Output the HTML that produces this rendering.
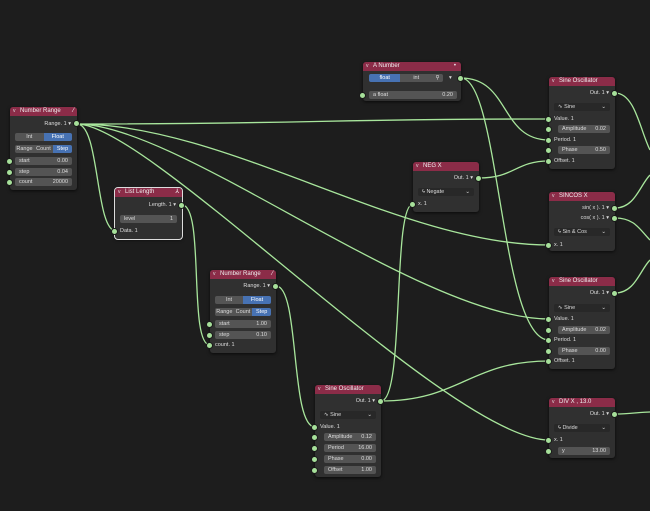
<!DOCTYPE html><html><head><meta charset="utf-8"><style>
body{margin:0;width:650px;height:511px;background:#1d1d1d;overflow:hidden;position:relative;font-family:"Liberation Sans",sans-serif}
svg{position:absolute;left:0;top:0}
.n{position:absolute;background:#303030;border-radius:3px;box-shadow:0 1px 3px rgba(0,0,0,.7)}
.sel{outline:1px solid #ddd}
.h{height:9px;background:#8b2c48;border-radius:3px 3px 0 0;font-size:6px;color:#eee;padding-left:10px;line-height:9px;position:relative;white-space:nowrap}
.h:before{content:"v";position:absolute;left:3px;top:0;font-size:5px;color:#ddd}
.r{position:absolute;font-size:5.5px;color:#ddd;line-height:8px;height:8px;white-space:nowrap}
.o{right:6px;text-align:right}
.i{left:5px}
.f{background:#545454;border-radius:2px;display:flex;justify-content:space-between;padding:0 4px;box-sizing:border-box}
.d{background:#282828;border-radius:2px;padding:0 4px;box-sizing:border-box}
.t{display:flex;border-radius:2px;overflow:hidden}
.t span{flex:1;text-align:center;background:#545454}
.t span.b{background:#4772b3;color:#fff}
.s{position:absolute;width:5px;height:5px;border-radius:50%;background:#a6e09a;box-shadow:0 0 0 1px #1a1a1a}
</style></head><body>
<svg width="650" height="511" fill="none" stroke="#a8e69c" stroke-width="1.3">
<path d="M77 124 C300 124 330 119 549 119"/>
<path d="M77 124 C227 124 399 245 549 245"/>
<path d="M77 124 C180 124 420 319 549 319"/>
<path d="M77 124 C150 124 450 440 549 440"/>
<path d="M77 124 C100 124 95 231 116 231"/>
<path d="M182 205 C205 205 188 345 210 345"/>
<path d="M276 286 C300 286 290 427 315 427"/>
<path d="M461 78 C510 78 500 140 549 140"/>
<path d="M461 78 C500 78 500 340 549 340"/>
<path d="M479 178 C515 178 515 161 549 161"/>
<path d="M381 401 C405 401 392 204 413 204"/>
<path d="M381 401 C460 401 470 361 549 361"/>
<path d="M615 93 C635 93 640 130 650 150"/>
<path d="M615 208 C635 208 640 185 650 175"/>
<path d="M615 218 C635 218 640 230 650 240"/>
<path d="M615 293 C635 293 640 270 650 260"/>
<path d="M615 414 C630 414 640 412 650 412"/>
</svg>

<div class="n" style="left:10px;top:107px;width:67px;height:83px">
<div class="h">Number Range<span style="position:absolute;right:3px;color:#fff">⁄</span></div>
<div class="r o" style="top:13px">Range. 1 ▾</div>
<div class="r t" style="top:26px;left:5px;width:57px"><span>Int</span><span class="b">Float</span></div>
<div class="r t" style="top:38px;left:5px;width:57px"><span>Range</span><span>Count</span><span class="b">Step</span></div>
<div class="r f" style="top:50px;left:5px;width:57px"><span>start</span><span>0.00</span></div>
<div class="r f" style="top:61px;left:5px;width:57px"><span>step</span><span>0.04</span></div>
<div class="r f" style="top:71px;left:5px;width:57px"><span>count</span><span>20000</span></div>
<div class="s" style="left:64px;top:14px"></div>
<div class="s" style="left:-3px;top:52px"></div><div class="s" style="left:-3px;top:63px"></div><div class="s" style="left:-3px;top:73px"></div>
</div>

<div class="n sel" style="left:115px;top:188px;width:67px;height:51px">
<div class="h">List Length<span style="position:absolute;right:3px;color:#fff">⅄</span></div>
<div class="r o" style="top:13px">Length. 1 ▾</div>
<div class="r f" style="top:27px;left:5px;width:57px"><span>level</span><span>1</span></div>
<div class="r i" style="top:39px">Data. 1</div>
<div class="s" style="left:64px;top:15px"></div><div class="s" style="left:-3px;top:41px"></div>
</div>

<div class="n" style="left:363px;top:62px;width:98px;height:39px">
<div class="h">A Number<span style="position:absolute;right:5px">•</span></div>
<div class="r t" style="top:12px;left:6px;width:74px"><span class="b">float</span><span>int</span><span style="flex:.35">⚲</span></div>
<div class="r" style="top:12px;left:86px">▾</div>
<div class="r f" style="top:29px;left:6px;width:88px"><span>a float</span><span>0.20</span></div>
<div class="s" style="left:95px;top:14px"></div><div class="s" style="left:-3px;top:31px"></div>
</div>

<div class="n" style="left:549px;top:77px;width:66px;height:92px">
<div class="h">Sine Oscillator</div>
<div class="r o" style="top:12px">Out. 1 ▾</div>
<div class="r d" style="top:26px;left:5px;width:56px">∿ Sine<span style="float:right">⌄</span></div>
<div class="r i" style="top:38px">Value. 1</div>
<div class="r f" style="top:48px;left:9px;width:52px"><span>Amplitude</span><span>0.02</span></div>
<div class="r i" style="top:59px">Period. 1</div>
<div class="r f" style="top:69px;left:9px;width:52px"><span>Phase</span><span>0.50</span></div>
<div class="r i" style="top:80px">Offset. 1</div>
<div class="s" style="left:63px;top:14px"></div>
<div class="s" style="left:-3px;top:40px"></div><div class="s" style="left:-3px;top:50px"></div><div class="s" style="left:-3px;top:61px"></div><div class="s" style="left:-3px;top:71px"></div><div class="s" style="left:-3px;top:82px"></div>
</div>

<div class="n" style="left:413px;top:162px;width:66px;height:50px">
<div class="h">NEG X</div>
<div class="r o" style="top:12px">Out. 1 ▾</div>
<div class="r d" style="top:26px;left:5px;width:56px">ϟ Negate<span style="float:right">⌄</span></div>
<div class="r i" style="top:38px">x. 1</div>
<div class="s" style="left:63px;top:14px"></div><div class="s" style="left:-3px;top:40px"></div>
</div>

<div class="n" style="left:549px;top:192px;width:66px;height:59px">
<div class="h">SINCOS X</div>
<div class="r o" style="top:12px">sin( x ). 1 ▾</div>
<div class="r o" style="top:22px">cos( x ). 1 ▾</div>
<div class="r d" style="top:36px;left:5px;width:56px">ϟ Sin &amp; Cos<span style="float:right">⌄</span></div>
<div class="r i" style="top:49px">x. 1</div>
<div class="s" style="left:63px;top:14px"></div><div class="s" style="left:63px;top:24px"></div><div class="s" style="left:-3px;top:51px"></div>
</div>

<div class="n" style="left:210px;top:270px;width:66px;height:83px">
<div class="h">Number Range<span style="position:absolute;right:3px;color:#fff">⁄</span></div>
<div class="r o" style="top:12px">Range. 1 ▾</div>
<div class="r t" style="top:26px;left:5px;width:56px"><span>Int</span><span class="b">Float</span></div>
<div class="r t" style="top:38px;left:5px;width:56px"><span>Range</span><span>Count</span><span class="b">Step</span></div>
<div class="r f" style="top:50px;left:5px;width:56px"><span>start</span><span>1.00</span></div>
<div class="r f" style="top:61px;left:5px;width:56px"><span>step</span><span>0.10</span></div>
<div class="r i" style="top:71px">count. 1</div>
<div class="s" style="left:63px;top:14px"></div>
<div class="s" style="left:-3px;top:52px"></div><div class="s" style="left:-3px;top:63px"></div><div class="s" style="left:-3px;top:73px"></div>
</div>

<div class="n" style="left:549px;top:277px;width:66px;height:92px">
<div class="h">Sine Oscillator</div>
<div class="r o" style="top:12px">Out. 1 ▾</div>
<div class="r d" style="top:27px;left:5px;width:56px">∿ Sine<span style="float:right">⌄</span></div>
<div class="r i" style="top:38px">Value. 1</div>
<div class="r f" style="top:49px;left:9px;width:52px"><span>Amplitude</span><span>0.02</span></div>
<div class="r i" style="top:59px">Period. 1</div>
<div class="r f" style="top:70px;left:9px;width:52px"><span>Phase</span><span>0.00</span></div>
<div class="r i" style="top:80px">Offset. 1</div>
<div class="s" style="left:63px;top:14px"></div>
<div class="s" style="left:-3px;top:40px"></div><div class="s" style="left:-3px;top:51px"></div><div class="s" style="left:-3px;top:61px"></div><div class="s" style="left:-3px;top:72px"></div><div class="s" style="left:-3px;top:82px"></div>
</div>

<div class="n" style="left:315px;top:385px;width:66px;height:92px">
<div class="h">Sine Oscillator</div>
<div class="r o" style="top:12px">Out. 1 ▾</div>
<div class="r d" style="top:26px;left:5px;width:56px">∿ Sine<span style="float:right">⌄</span></div>
<div class="r i" style="top:38px">Value. 1</div>
<div class="r f" style="top:48px;left:9px;width:52px"><span>Amplitude</span><span>0.12</span></div>
<div class="r f" style="top:59px;left:9px;width:52px"><span>Period</span><span>16.00</span></div>
<div class="r f" style="top:70px;left:9px;width:52px"><span>Phase</span><span>0.00</span></div>
<div class="r f" style="top:81px;left:9px;width:52px"><span>Offset</span><span>1.00</span></div>
<div class="s" style="left:63px;top:14px"></div>
<div class="s" style="left:-3px;top:40px"></div><div class="s" style="left:-3px;top:50px"></div><div class="s" style="left:-3px;top:61px"></div><div class="s" style="left:-3px;top:72px"></div><div class="s" style="left:-3px;top:83px"></div>
</div>

<div class="n" style="left:549px;top:398px;width:66px;height:60px">
<div class="h">DIV X , 13.0</div>
<div class="r o" style="top:12px">Out. 1 ▾</div>
<div class="r d" style="top:26px;left:5px;width:56px">ϟ Divide<span style="float:right">⌄</span></div>
<div class="r i" style="top:38px">x. 1</div>
<div class="r f" style="top:49px;left:9px;width:52px"><span>y</span><span>13.00</span></div>
<div class="s" style="left:63px;top:14px"></div><div class="s" style="left:-3px;top:40px"></div><div class="s" style="left:-3px;top:51px"></div>
</div>
</body></html>
